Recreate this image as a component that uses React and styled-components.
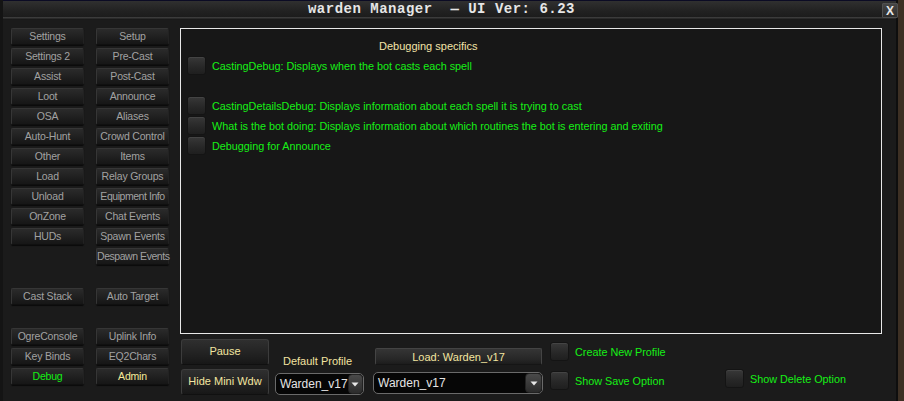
import styled, { createGlobalStyle } from 'styled-components';

const GlobalStyle = createGlobalStyle`
  html, body {
    margin: 0;
    padding: 0;
    background: #2a2118;
  }
  * {
    box-sizing: border-box;
  }
`;

const leftButtons = [
  ['Settings', 'Setup'],
  ['Settings 2', 'Pre-Cast'],
  ['Assist', 'Post-Cast'],
  ['Loot', 'Announce'],
  ['OSA', 'Aliases'],
  ['Auto-Hunt', 'Crowd Control'],
  ['Other', 'Items'],
  ['Load', 'Relay Groups'],
  ['Unload', 'Equipment Info'],
  ['OnZone', 'Chat Events'],
  ['HUDs', 'Spawn Events'],
  [null, 'Despawn Events'],
  [null, null],
  ['Cast Stack', 'Auto Target'],
  [null, null],
  ['OgreConsole', 'Uplink Info'],
  ['Key Binds', 'EQ2Chars'],
  ['Debug', 'Admin'],
];

const debugOptions = [
  { label: 'CastingDebug: Displays when the bot casts each spell', gap: false },
  { label: 'CastingDetailsDebug: Displays information about each spell it is trying to cast', gap: true },
  { label: 'What is the bot doing: Displays information about which routines the bot is entering and exiting', gap: false },
  { label: 'Debugging for Announce', gap: false },
];

const ArrowIcon = () => (
  <svg width="8" height="5" viewBox="0 0 8 5">
    <path d="M0.5 0.5 L7.5 0.5 L4 4.5 Z" fill="#e8e8e8" />
  </svg>
);

const Dropdown = ({ width, value }) => (
  <Select $width={width}>
    <SelectValue>{value}</SelectValue>
    <SelectArrow>
      <ArrowIcon />
    </SelectArrow>
  </Select>
);

const CheckOption = ({ label }) => (
  <OptionRow>
    <Checkbox />
    <OptionLabel>{label}</OptionLabel>
  </OptionRow>
);

const App = () => {
  return (
    <>
      <GlobalStyle />
      <Window>
        <TitleBar>
          <Title>warden Manager&nbsp; — UI Ver: 6.23</Title>
          <CloseButton>X</CloseButton>
        </TitleBar>
        <TitleStripe />
        <Body>
          <Sidebar>
            {leftButtons.flat().map((name, i) =>
              name ? (
                <NavButton
                  key={i}
                  $tone={name === 'Debug' ? 'green' : name === 'Admin' ? 'yellow' : 'gray'}
                  $tight={name.length > 13}
                >
                  {name}
                </NavButton>
              ) : (
                <span key={i} />
              )
            )}
          </Sidebar>
          <Main>
            <Panel>
              <PanelHeading>Debugging specifics</PanelHeading>
              {debugOptions.map((opt) => (
                <PanelItem key={opt.label} $gap={opt.gap}>
                  <CheckOption label={opt.label} />
                </PanelItem>
              ))}
            </Panel>
            <Controls>
              <ButtonStack>
                <ActionButton>Pause</ActionButton>
                <ActionButton>Hide Mini Wdw</ActionButton>
              </ButtonStack>
              <ProfileColumn>
                <ProfileLabel>Default Profile</ProfileLabel>
                <Dropdown width={89} value="Warden_v17" />
              </ProfileColumn>
              <LoadColumn>
                <LoadButton>Load: Warden_v17</LoadButton>
                <Dropdown width={170} value="Warden_v17" />
              </LoadColumn>
              <OptionsColumn>
                <CheckOption label="Create New Profile" />
                <CheckOption label="Show Save Option" />
              </OptionsColumn>
              <DeleteColumn>
                <CheckOption label="Show Delete Option" />
              </DeleteColumn>
            </Controls>
          </Main>
        </Body>
      </Window>
    </>
  );
};

const Window = styled.div`
  width: 898px;
  height: 401px;
  background: #1a1a1a;
  border-right: 2px solid #0e0e0e;
  border-left: 3px solid #141414;
  box-shadow: 6px 0 0 #3d3024;
  display: flex;
  flex-direction: column;
  font-family: 'Liberation Sans', Arial, sans-serif;
`;

const TitleBar = styled.div`
  position: relative;
  height: 17px;
  border-top: 1px solid #0b0b24;
  background: linear-gradient(#303030, #222 60%, #1c1c1c);
  display: flex;
  align-items: center;
  justify-content: center;
`;

const Title = styled.div`
  font-family: 'Liberation Mono', 'Courier New', monospace;
  font-weight: bold;
  font-size: 14px;
  letter-spacing: 0.5px;
  color: #e6e6e6;
  margin-right: 16px;
  white-space: nowrap;
`;

const CloseButton = styled.div`
  position: absolute;
  right: -2px;
  top: 2px;
  width: 16px;
  height: 15px;
  background: linear-gradient(#464646, #2c2c2c);
  border: 1px solid #505050;
  border-radius: 1px;
  color: #e8e8e8;
  font-family: 'Liberation Sans', Arial, sans-serif;
  font-weight: bold;
  font-size: 12px;
  display: flex;
  align-items: center;
  justify-content: center;
`;

const TitleStripe = styled.div`
  height: 3px;
  background: linear-gradient(#444, #2a2a2a 50%, #111);
`;

const Body = styled.div`
  flex: 1;
  display: flex;
  background: #1b1b1b;
`;

const Sidebar = styled.div`
  width: 177px;
  padding: 8px 0 0 8px;
  display: grid;
  grid-template-columns: 73px 73px;
  grid-auto-rows: 17px;
  column-gap: 12px;
  row-gap: 3px;
  align-content: start;
`;

const toneColors = {
  gray: '#a2a2a2',
  green: '#14f014',
  yellow: '#f6ec9a',
};

const NavButton = styled.div`
  background: linear-gradient(#2b2b2b, #1c1c1c 70%, #161616);
  border: 1px solid #363636;
  border-bottom-color: #101010;
  border-right-color: #222;
  border-radius: 2px;
  box-shadow: 0 1px 1px #0a0a0a;
  color: ${(p) => toneColors[p.$tone]};
  font-size: 10.5px;
  line-height: 15px;
  text-align: center;
  white-space: nowrap;
  letter-spacing: ${(p) => (p.$tight ? '-0.45px' : '-0.2px')};
`;

const Main = styled.div`
  flex: 1;
  display: flex;
  flex-direction: column;
  padding: 8px 14px 0 0;
`;

const Panel = styled.div`
  height: 306px;
  border: 1px solid #e8e8e8;
  background: #171717;
  padding: 10px 0 0 6px;
  display: flex;
  flex-direction: column;
`;

const PanelHeading = styled.div`
  color: #f3e3a8;
  font-size: 11px;
  line-height: 14px;
  margin-left: 192px;
  margin-bottom: 3px;
`;

const PanelItem = styled.div`
  margin-top: ${(p) => (p.$gap ? '21px' : '1px')};
  &:nth-child(2) {
    margin-top: 0;
  }
`;

const OptionRow = styled.div`
  display: flex;
  align-items: center;
  gap: 6px;
  height: 19px;
`;

const Checkbox = styled.div`
  width: 19px;
  height: 19px;
  border-radius: 3px;
  background: linear-gradient(#383838, #272727 60%, #1f1f1f);
  border: 1px solid #141414;
  box-shadow: inset 0 1px 0 #444;
  flex-shrink: 0;
`;

const OptionLabel = styled.span`
  color: #16f016;
  font-size: 10.8px;
  white-space: nowrap;
`;

const Controls = styled.div`
  display: flex;
  padding-top: 5px;
  padding-left: 1px;
`;

const ButtonStack = styled.div`
  width: 88px;
  display: flex;
  flex-direction: column;
  gap: 4px;
`;

const ActionButton = styled.div`
  height: 26px;
  background: linear-gradient(#2f2f2f, #1f1f1f 70%, #171717);
  border: 1px solid #3c3c3c;
  border-bottom-color: #101010;
  border-radius: 3px;
  color: #f3e6a0;
  font-size: 11px;
  display: flex;
  align-items: center;
  justify-content: center;
  padding-bottom: 2px;
`;

const ProfileColumn = styled.div`
  width: 98px;
  margin-left: 6px;
  display: flex;
  flex-direction: column;
  justify-content: flex-end;
  gap: 6px;
`;

const ProfileLabel = styled.div`
  color: #f3e3a0;
  font-size: 11px;
  padding-left: 8px;
`;

const LoadColumn = styled.div`
  width: 171px;
  display: flex;
  flex-direction: column;
  justify-content: flex-end;
  gap: 7px;
  padding-bottom: 1px;
`;

const LoadButton = styled.div`
  margin: 0 2px;
  height: 17px;
  background: linear-gradient(#353535, #262626 70%, #1c1c1c);
  border: 1px solid #444;
  border-bottom-color: #151515;
  border-radius: 2px;
  color: #f3e6a0;
  font-size: 11px;
  display: flex;
  align-items: center;
  justify-content: center;
`;

const Select = styled.div`
  width: ${(p) => p.$width}px;
  height: 22px;
  background: #060606;
  border: 1px solid #6a6a6a;
  border-radius: 5px;
  display: flex;
  align-items: center;
  justify-content: space-between;
  padding-left: 4px;
`;

const SelectValue = styled.span`
  color: #e4e4e4;
  font-size: 12px;
`;

const SelectArrow = styled.div`
  width: 17px;
  height: 20px;
  background: linear-gradient(#4a4a4a, #2c2c2c);
  border: 1px solid #222;
  border-radius: 4px;
  display: flex;
  align-items: center;
  justify-content: center;
`;

const OptionsColumn = styled.div`
  margin-left: 6px;
  width: 175px;
  padding-top: 3px;
  display: flex;
  flex-direction: column;
  gap: 10px;
`;

const DeleteColumn = styled.div`
  display: flex;
  align-items: flex-end;
  padding-bottom: 7px;
`;

export default App;
